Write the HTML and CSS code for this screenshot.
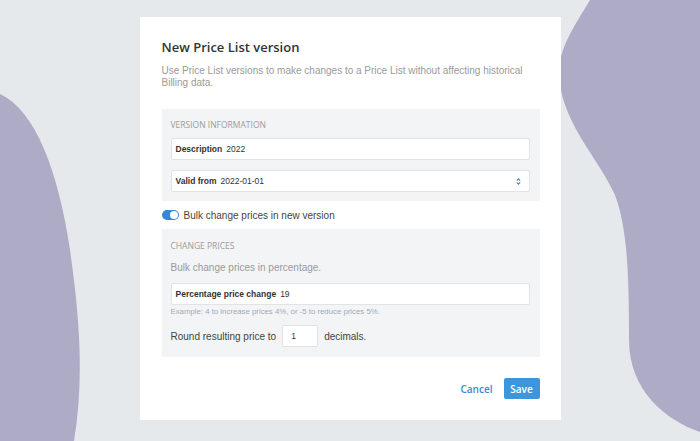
FILE: index.html
```html
<!DOCTYPE html>
<html lang="en">
<head>
    <meta charset="UTF-8">
    <meta name="viewport" content="width=device-width, initial-scale=1.0">
    <title>New Price List version</title>
    <link rel="stylesheet" href="styles.css">
</head>
<body>
    <!-- background shapes -->
    <svg class="blobs" width="700" height="441" viewBox="0 0 700 441">
        <path d="M0 94 C35 110 58 170 70 250 C80 320 84 380 74 441 L0 441 Z" fill="#aeabc6"/>
        <path d="M590 0 C575 25 559 48 559 72 C559 120 600 160 615 195 C628 230 629 280 629 340 C629 390 665 420 700 432 L700 0 Z" fill="#aeabc6"/>
    </svg>

    <main class="dialog">
        <h1 class="dialogTitle">New Price List version</h1>
        <p class="dialogIntro">Use Price List versions to make changes to a Price List without affecting historical Billing data.</p>

        <section class="panel">
            <h2 class="panelTitle">Version information</h2>
            <div class="field">
                <span class="fieldLabel">Description</span>
                <span class="fieldValue">2022</span>
            </div>
            <div class="field">
                <span class="fieldLabel">Valid from</span>
                <span class="fieldValue">2022-01-01</span>
                <svg class="selectArrows" width="5" height="7" viewBox="0 0 5 7">
                    <path d="M0.8 2.6 L2.5 0.9 L4.2 2.6 M0.8 4.4 L2.5 6.1 L4.2 4.4" fill="none" stroke="#4a86c5" stroke-width="1.1"/>
                </svg>
            </div>
        </section>

        <div class="toggleRow">
            <span class="toggle"><span class="knob"></span></span>
            <span>Bulk change prices in new version</span>
        </div>

        <section class="panel panelPrices">
            <h2 class="panelTitle">Change prices</h2>
            <p class="panelText">Bulk change prices in percentage.</p>
            <div class="field">
                <span class="fieldLabel">Percentage price change</span>
                <span class="fieldValue">19</span>
            </div>
            <p class="hint">Example: 4 to increase prices 4%, or -5 to reduce prices 5%.</p>
            <div class="roundRow">
                <span>Round resulting price to</span>
                <span class="smallBox">1</span>
                <span>decimals.</span>
            </div>
        </section>

        <div class="actions">
            <button class="btnLink">Cancel</button>
            <button class="btnPrimary">Save</button>
        </div>
    </main>
</body>
</html>
```

FILE: styles.css
```css
/* page background */
body {
    margin: 0;
    padding-top: 17px;
    height: 441px;
    box-sizing: border-box;
    background-color: #e6e9ec;
    font-family: "Liberation Sans", Arial, sans-serif;
    overflow: hidden;
}

/* purple shapes behind the dialog */
.blobs {
    position: absolute;
    left: 0;
    top: 0;
}

/* the white dialog card */
.dialog {
    position: relative;
    width: 421px;
    margin: 0 auto;
    padding: 21px 21px 21px 22px;
    box-sizing: border-box;
    background-color: #fff;
}

.dialogTitle {
    margin: 0;
    font-family: "Open Sans", sans-serif;
    font-size: 13px;
    font-weight: 600;
    line-height: 18px;
    color: #333;
}

.dialogIntro {
    margin: 9px 0 0;
    font-size: 10px;
    line-height: 12px;
    color: #9a9a9a;
}

/* grey boxes */
.panel {
    margin-top: 20px;
    padding: 10px 10px 9px 9px;
    background-color: #f2f4f5;
}

.panelTitle {
    margin: 0 0 7px;
    font-family: "Open Sans", sans-serif;
    font-size: 8.5px;
    font-weight: 400;
    line-height: 12px;
    text-transform: uppercase;
    color: #9c9c9c;
}

.panelText {
    margin: 9px 0 8px;
    font-size: 10px;
    line-height: 14px;
    color: #9a9a9a;
}

.panelPrices {
    margin-top: 0;
    padding-top: 11px;
    padding-bottom: 10px;
}

.panelPrices .panelTitle {
    margin-bottom: 0;
}

/* text fields */
.field {
    display: flex;
    align-items: center;
    height: 22px;
    padding: 0 8px 0 4px;
    border: 1px solid #e1e3e5;
    border-radius: 2px;
    background-color: #fff;
    box-sizing: border-box;
    font-size: 8.5px;
    color: #333;
}

.field + .field {
    margin-top: 10px;
}

.fieldLabel {
    font-weight: bold;
    margin-right: 4px;
}

.selectArrows {
    margin-left: auto;
}

/* switch row */
.toggleRow {
    display: flex;
    align-items: center;
    height: 28px;
    font-size: 10px;
    color: #444;
}

.toggle {
    display: flex;
    align-items: center;
    justify-content: flex-end;
    width: 17px;
    height: 10px;
    margin-right: 5px;
    padding: 0 1px;
    box-sizing: border-box;
    border-radius: 5px;
    background-color: #3a86d6;
}

.knob {
    width: 8px;
    height: 8px;
    border-radius: 50%;
    background-color: #fff;
}

.hint {
    margin: 2px 0 8px;
    font-size: 7.8px;
    line-height: 10px;
    color: #9eabb9;
}

.roundRow {
    display: flex;
    align-items: center;
    height: 22px;
    font-size: 10px;
    color: #444;
}

.smallBox {
    display: flex;
    align-items: center;
    width: 36px;
    height: 22px;
    margin: 0 6px;
    padding-left: 8px;
    box-sizing: border-box;
    border: 1px solid #e1e3e5;
    border-radius: 2px;
    background-color: #fff;
    font-size: 8.5px;
    color: #333;
}

/* buttons at the bottom */
.actions {
    display: flex;
    justify-content: flex-end;
    align-items: center;
    margin-top: 21px;
}

.actions button {
    font-family: "Open Sans", sans-serif;
    font-size: 10px;
    font-weight: 600;
    border: 0;
    cursor: pointer;
}

.btnLink {
    margin-right: 11px;
    padding: 0;
    background: none;
    color: #3a8ad3;
}

.btnPrimary {
    height: 21px;
    width: 36px;
    padding: 0;
    border-radius: 2px;
    background-color: #3d95dc;
    color: #fff;
}
```
